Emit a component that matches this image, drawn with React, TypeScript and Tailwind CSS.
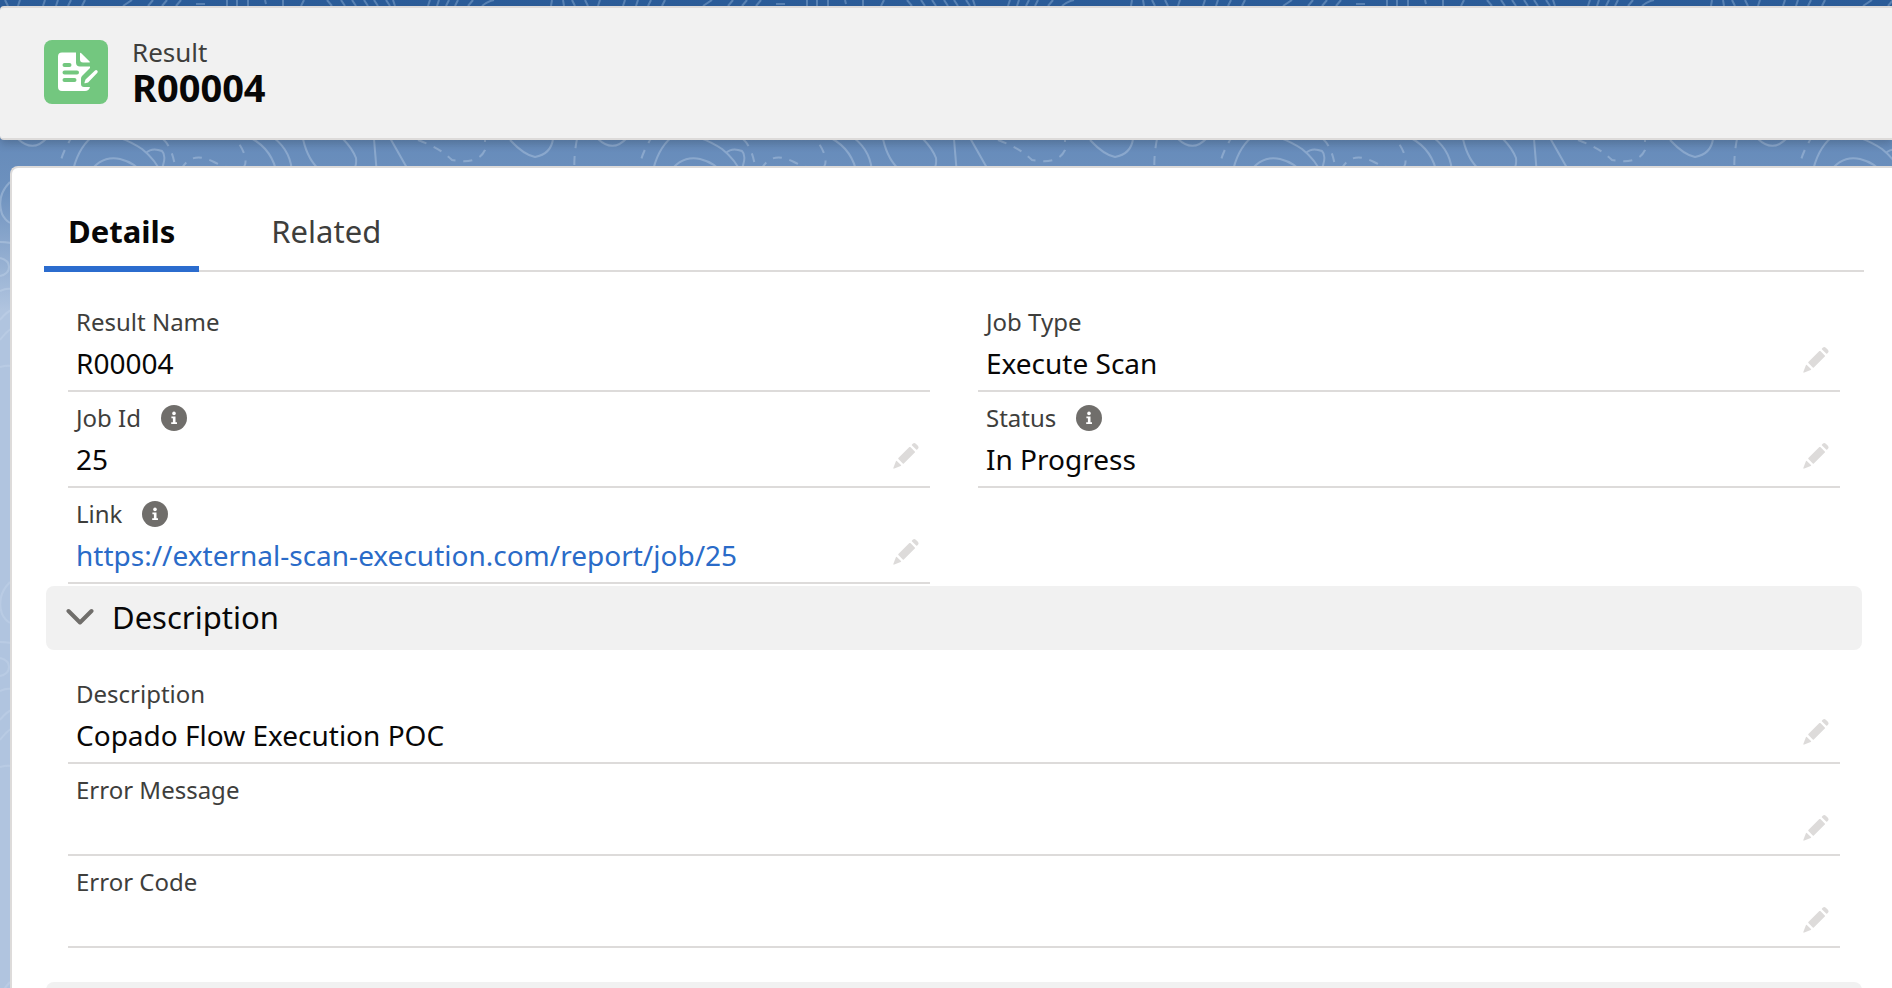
import React from "react";

type FieldProps = {
  label: string;
  value?: string;
  href?: string;
  info?: boolean;
  editable?: boolean;
};

function InfoIcon() {
  return (
    <svg viewBox="0 0 26 26" className="size-[26px]" aria-hidden="true">
      <circle cx="13" cy="13" r="13" fill="#706e6b" />
      <circle cx="13" cy="8.4" r="1.8" fill="#fff" />
      <path d="M10.4 11.500h4.100v5.800h1.500v1.800h-5.800v-1.800h1.700v-4h-1.500z" fill="#fff" />
    </svg>
  );
}

function PencilIcon() {
  return (
    <svg viewBox="0 0 28 28" className="size-7" fill="#dddbda" aria-hidden="true">
      <path d="M20 2.400l1-1q1.400-1 2.800.3l2.100 2.100q1.300 1.400.3 2.800l-1 1q-.5.400-1 0l-4.200-4.200q-.5-.5 0-1z" />
      <path d="M17.400 5.100q.5-.4 1 0l4.400 4.400q.4.500 0 1L11.800 21.500q-.5.400-1 0l-4.400-4.400q-.4-.5 0-1z" />
      <path d="M3.900 19.200q.3-.9.900-.3l4.200 4.200q.5.600-.3.900l-6.400 2.600q-1.200.3-.9-.9z" />
    </svg>
  );
}

function Field({ label, value, href, info, editable }: FieldProps) {
  return (
    <div className="flex items-end justify-between border-b-2 border-[#dddbda] py-2 pr-2.5 pl-2">
      <dl className="min-w-0">
        <dt className="flex h-9 items-center gap-5 text-2xl text-[#3e3e3c]">
          {label}
          {info && (
            <button type="button" aria-label={"Help " + label}>
              <InfoIcon />
            </button>
          )}
        </dt>
        <dd className={value ? "h-[42px] pt-0.5 text-[28px] leading-[42px] text-[#080707]" : "h-[38px]"}>
          {href ? (
            <a href={href} className="text-[#2a6bc8]">
              {value}
            </a>
          ) : (
            value
          )}
        </dd>
      </dl>
      {editable && (
        <button type="button" aria-label={"Edit " + label} className={value ? "mb-2" : "mb-1"}>
          <PencilIcon />
        </button>
      )}
    </div>
  );
}

function Contours() {
  return (
    <svg className="absolute inset-0 h-full w-full" aria-hidden="true">
      <defs>
        <pattern id="contours" width="580" height="400" patternUnits="userSpaceOnUse">
          <g fill="none" stroke="#c8d8ec" strokeOpacity="0.36" strokeWidth="2">
            <path d="M18 139q15 14 29-1M72 175q5-26 20-38Q112 130 142 149 156 160 162 175M88 175q12-20 32-16 16 4 24 16M98 174q4-10 10-2M106 170q4-4 12 4M146 153q6-6 16-2 6 6-3 24M251 138q22 12 26 37M274 138q18 14 18 37M303 139q5 22 18 32 26 0 31 1 5-5 4-14-4-10-13-19M374 139l3 36M390 138l21 37M510 140q14 15 25 17 16-3 18-18M598 139q14 14 28-1M10 182Q-4 196 2 214q3 6 8 9M0 242q12 0 14 3M0 258q9 2 9 9t-9 9M0 291q6-3 12-2M0 320q6-8 12-10M0 340q6-8 12-12M0 367q6-2 12-1" />
            <path d="M-20 0M598 139" />
            <path strokeDasharray="9 8" d="M58 175q2-20 14-38M163 139q11 10 13 36M181 170q10-20 33-8 20 10 30 5 6-10-10-30M418 140q22 8 34 20 26 5 33-10v-14M577 139q-4 20-2 36" />
          </g>
        </pattern>
        <pattern id="ridge" width="580" height="8" patternUnits="userSpaceOnUse">
          <path d="M5 0l3 6M20 0l-2 6M45 0l-2 6M58 0l-2 6M71 0l-3 6M85 0l-3 6M123 6l9-6M148 6l5-6M162 6l5-6M176 6l5-6M196 4h9M227 0v6M237 0v6M248 0v6M265 0l1 4M283 0v6M304 0l-3 6M327 0l5 6M341 0l4 6M352 0l4 6M364 0l4 6M374 0l4 6M386 0l4 6M393 0l2 6M428 6l2-6M437 6l2-6M446 6l3-6M455 6l3-6M468 6l5-6M482 6q6-5 12-6M552 0l-1 6M563 0l1 6M572 0l3 6" fill="none" stroke="#9ebbdc" strokeOpacity="0.4" strokeWidth="2" />
        </pattern>
      </defs>
      <rect width="100%" height="100%" fill="url(#contours)" />
      <rect width="100%" height="8" fill="url(#ridge)" />
    </svg>
  );
}

export default function App() {
  return (
    <div className="relative flex h-screen flex-col overflow-hidden bg-[#b0c4df] bg-[linear-gradient(to_bottom,#2a5b98_0px,#2f609c_10px,#668bba_140px,#6d91be_190px,#b0c4df_310px)] bg-no-repeat font-['Noto_Sans','Open_Sans',sans-serif]">
      <Contours />
      <header className="relative mt-1.5 flex h-[134px] shrink-0 items-start gap-6 rounded-l-sm border-y-2 border-[#dddbda] bg-[#f1f1f1] pt-8 pl-11 shadow-[0_4px_8px_rgba(0,0,0,0.18)]">
        <svg viewBox="0 0 64 64" className="size-16" aria-hidden="true">
          <rect width="64" height="64" rx="8" fill="#73c77f" />
          <path d="M18 12.500h14v10q0 4 4 4h10v1.500l-8 8q-1 1-1 3v5q0 3 3 3h6q-1 4-5 4H18q-4 0-4-4V16.500q0-4 4-4z" fill="#fff" />
          <path d="M36 13.500q0-1.400 1-.4l8.600 8.400q1 1.100-.4 1.100H39q-3 0-3-3z" fill="#fff" />
          <path d="M41.500 39.500l9.500-9q1.200-.8 2.200.1t.2 2.200l-9.300 9.700-3 .8q-1 .1-.6-.9z" fill="#fff" />
          <path d="M20.500 25h5M20.500 32.500h12.500M20.500 40h10" stroke="#73c77f" strokeWidth="4" strokeLinecap="round" />
        </svg>
        <div className="text-[#080707]">
          <p className="-mt-1 text-[26px] leading-8 text-[#3e3e3c]">Result</p>
          <h1 className="text-[38px] leading-[38px] font-bold">R00004</h1>
        </div>
      </header>

      <main className="relative mt-[26px] ml-2.5 min-h-0 flex-1 overflow-hidden rounded-tl-lg border-t-2 border-l-2 border-[#dddbda] bg-white pt-8 pr-7 pl-8">
        <div role="tablist" className="flex h-[72px] border-b-2 border-[#dddbda] text-[31px]">
          <button type="button" role="tab" aria-selected="true" className="-mb-0.5 border-b-6 border-[#2b6cce] px-6 pb-1 font-bold text-[#080707]">
            Details
          </button>
          <button type="button" role="tab" aria-selected="false" className="ml-12 px-6 pb-2 text-[#3e3e3c]">
            Related
          </button>
        </div>

        <section className="grid grid-cols-2 gap-x-12 px-6 pt-6">
          <Field label="Result Name" value="R00004" />
          <Field label="Job Type" value="Execute Scan" editable />
          <Field label="Job Id" value="25" info editable />
          <Field label="Status" value="In Progress" info editable />
          <Field label="Link" value="https://external-scan-execution.com/report/job/25" href="https://external-scan-execution.com/report/job/25" info editable />
        </section>

        <section className="mt-0.5">
          <h2 className="mx-0.5">
            <button type="button" aria-expanded="true" className="flex h-16 w-full items-center gap-[18px] rounded-lg bg-[#f1f1f1] pb-0.5 pl-5 text-[31px] text-[#080707]">
              <svg viewBox="0 0 28 18" className="w-7" aria-hidden="true">
                <path d="M2.500 3L14 14.500 25.500 3" fill="none" stroke="#706e6b" strokeWidth="4" strokeLinecap="round" strokeLinejoin="round" />
              </svg>
              Description
            </button>
          </h2>
          <div className="px-6 pt-[18px]">
            <Field label="Description" value="Copado Flow Execution POC" editable />
            <Field label="Error Message" editable />
            <Field label="Error Code" editable />
          </div>
        </section>

        <div className="mx-0.5 mt-[34px] h-16 rounded-lg bg-[#f1f1f1]" />
      </main>
    </div>
  );
}
